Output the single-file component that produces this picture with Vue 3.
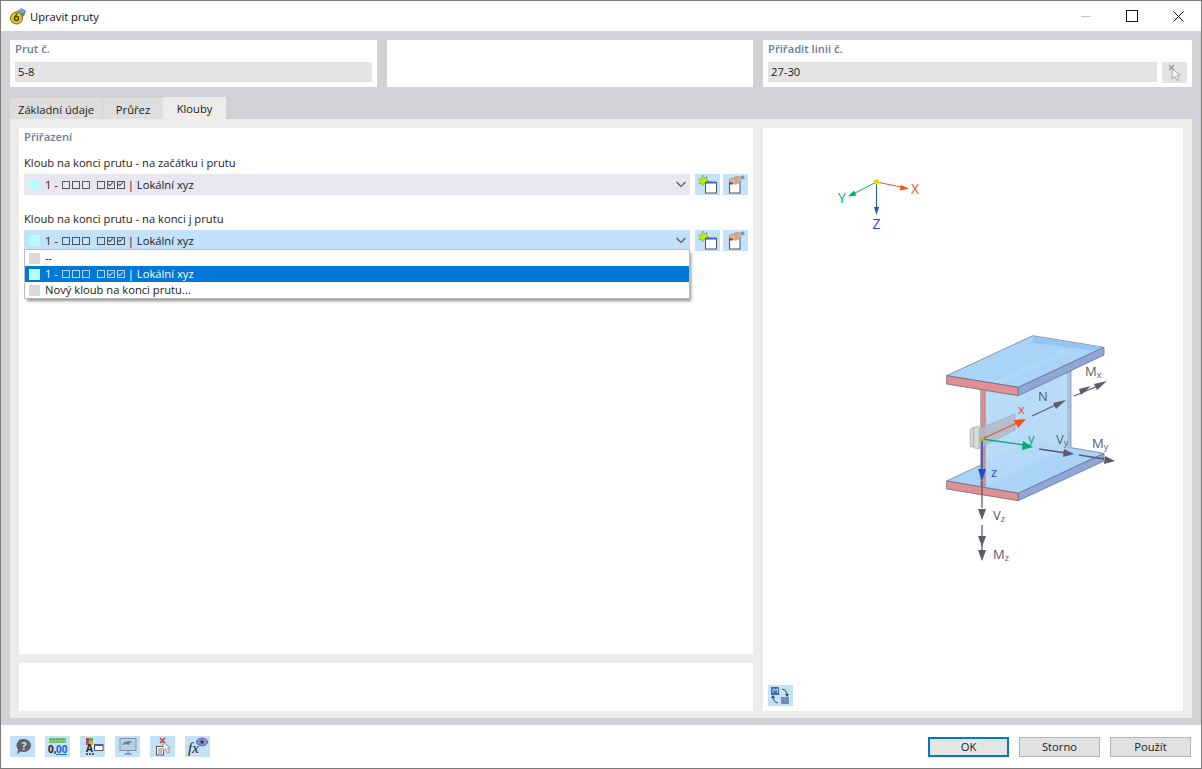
<script setup>
const tabs = [
  { label: 'Základní údaje', w: 92 },
  { label: 'Průřez', w: 60 },
  { label: 'Klouby', w: 63, active: true }
]
const boxesA = [0, 0, 0]
const boxesB = [0, 1, 1]
</script>

<template>
  <div class="win">
    <header class="title">
      <svg class="appicon" viewBox="0 0 18 18" width="18" height="18">
        <path d="M5 6 L12 1 L17 4 L15 9 L8 12Z" fill="#5b86b5" />
        <path d="M7 5 L13 2 M8 7 L15 4" stroke="#b8d0e4" stroke-width="1" />
        <circle cx="7.5" cy="11" r="6" fill="#e2c526" stroke="#77691a" stroke-width="1" />
        <circle cx="7.5" cy="11.5" r="2" fill="none" stroke="#4b4410" stroke-width="1.4" />
        <path d="M8 6.5 L6 10" stroke="#4b4410" stroke-width="1.4" />
      </svg>
      <span class="title-text">Upravit pruty</span>
      <div class="winbtns">
        <span class="wb"><i class="min"></i></span>
        <span class="wb"><i class="max"></i></span>
        <span class="wb">
          <svg width="11" height="11" viewBox="0 0 11 11"><path d="M.5.5l10 10M10.500.5l-10 10" stroke="#111" stroke-width="1" fill="none" /></svg>
        </span>
      </div>
    </header>

    <main class="body">
      <section class="toprow">
        <div class="tcard">
          <div class="tlabel">Prut č.</div>
          <div class="tfield">5-8</div>
        </div>
        <div class="tcard"></div>
        <div class="tcard">
          <div class="tlabel">Přiřadit linii č.</div>
          <div class="tline">
            <div class="tfield grow">27-30</div>
            <span class="pickbtn">
              <svg width="18" height="18" viewBox="0 0 18 18">
                <path d="M3 1l5 5M8 1L3 6" stroke="#9a9a9a" stroke-width="1.300" />
                <path d="M6 5l0 10 3-2.500 2 4 2-1-2-4 3.500-.5z" fill="#f2f2f2" stroke="#a8a8a8" stroke-width="1" />
              </svg>
            </span>
          </div>
        </div>
      </section>

      <nav class="tabs">
        <span v-for="t in tabs" :key="t.label" class="tab" :class="{ active: t.active }" :style="{ width: t.w + 'px' }">{{ t.label }}</span>
      </nav>

      <section class="content">
        <div class="leftcol">
          <div class="panel">
            <div class="ptitle">Přiřazení</div>

            <div class="flabel first">Kloub na konci prutu - na začátku i prutu</div>
            <div class="comborow">
              <div class="combo lilac">
                <i class="sw cyan"></i>
                <span class="ctext">1 -<span class="bxs lead"><i v-for="(b, n) in boxesA" :key="n" class="bx"></i></span><span class="bxs"><i v-for="(b, n) in boxesB" :key="n" class="bx" :class="{ on: b }"></i></span> | Lokální xyz</span>
                <svg class="chev" width="12" height="7" viewBox="0 0 12 7"><path d="M1.500 1l4.500 4.500L10.500 1" fill="none" stroke="#555" stroke-width="1.200" /></svg>
              </div>
              <span class="ibtn first-btn">
                <svg width="20" height="19" viewBox="0 0 20 19">
                  <path d="M5 0l1.300 3 3-1.500L8 4.500l3 1.500-3 1 1 3-3-1.500L4.500 11 3.800 8 .5 9l2-2.500L.5 4l3 .3z" fill="#b7f000" stroke="#7f9a55" stroke-width=".6" />
                  <rect x="7.500" y="7.500" width="11" height="10.500" fill="#fff" stroke="#555" />
                  <rect x="8" y="6.500" width="10.500" height="2" fill="#4c5fae" />
                </svg>
              </span>
              <span class="ibtn">
                <svg width="20" height="19" viewBox="0 0 20 19">
                  <rect x="3.500" y="7.500" width="10.500" height="10.500" fill="#fff" stroke="#555" />
                  <rect x="4" y="8" width="3" height="1.500" fill="#555" />
                  <path d="M2.500 5.500L6 3l5-1.500 4 .5.500 3-2.500 3-3.500 1.500-3-1.500-2.500-1z" fill="#dcae94" stroke="#a77d66" stroke-width=".5" />
                  <path d="M8 4l3 .5M9 6l3 .5" stroke="#a77d66" stroke-width=".5" />
                  <path d="M14 2.500l3-2.500 2 3.500-2.500.5z" fill="#5a93cf" />
                </svg>
              </span>
            </div>

            <div class="flabel second">Kloub na konci prutu - na konci j prutu</div>
            <div class="comborow combowrap">
              <div class="combo open">
                <i class="sw cyan"></i>
                <span class="ctext">1 -<span class="bxs lead"><i v-for="(b, n) in boxesA" :key="n" class="bx"></i></span><span class="bxs"><i v-for="(b, n) in boxesB" :key="n" class="bx" :class="{ on: b }"></i></span> | Lokální xyz</span>
                <svg class="chev" width="12" height="7" viewBox="0 0 12 7"><path d="M1.500 1l4.500 4.500L10.500 1" fill="none" stroke="#555" stroke-width="1.200" /></svg>
              </div>
              <span class="ibtn first-btn">
                <svg width="20" height="19" viewBox="0 0 20 19">
                  <path d="M5 0l1.300 3 3-1.500L8 4.500l3 1.500-3 1 1 3-3-1.500L4.500 11 3.800 8 .5 9l2-2.500L.5 4l3 .3z" fill="#b7f000" stroke="#7f9a55" stroke-width=".6" />
                  <rect x="7.500" y="7.500" width="11" height="10.500" fill="#fff" stroke="#555" />
                  <rect x="8" y="6.500" width="10.500" height="2" fill="#4c5fae" />
                </svg>
              </span>
              <span class="ibtn">
                <svg width="20" height="19" viewBox="0 0 20 19">
                  <rect x="3.500" y="7.500" width="10.500" height="10.500" fill="#fff" stroke="#555" />
                  <rect x="4" y="8" width="3" height="1.500" fill="#555" />
                  <path d="M2.500 5.500L6 3l5-1.500 4 .5.500 3-2.500 3-3.500 1.500-3-1.500-2.500-1z" fill="#dcae94" stroke="#a77d66" stroke-width=".5" />
                  <path d="M8 4l3 .5M9 6l3 .5" stroke="#a77d66" stroke-width=".5" />
                  <path d="M14 2.500l3-2.500 2 3.500-2.500.5z" fill="#5a93cf" />
                </svg>
              </span>

              <div class="popup">
                <div class="opt"><i class="sw grey"></i><span>--</span></div>
                <div class="opt sel">
                  <i class="sw cyan"></i>
                  <span class="ctext">1 -<span class="bxs lead"><i v-for="(b, n) in boxesA" :key="n" class="bx"></i></span><span class="bxs"><i v-for="(b, n) in boxesB" :key="n" class="bx" :class="{ on: b }"></i></span> | Lokální xyz</span>
                </div>
                <div class="opt"><i class="sw grey"></i><span>Nový kloub na konci prutu...</span></div>
              </div>
            </div>
          </div>
          <div class="panel-bottom"></div>
        </div>

        <div class="rightcol">
          <svg class="scene" viewBox="763 128 420 583" width="420" height="583">
            <!-- global axes -->
            <line x1="876.500" y1="182" x2="901" y2="187" stroke="#f4511e" stroke-width="1" />
            <path d="M909 188.500L900 190.500 900.800 185z" fill="#f4511e" />
            <line x1="876.500" y1="182" x2="855" y2="193" stroke="#0ba67a" stroke-width="1" />
            <path d="M848 196.500L854 190.500 856.500 195.500z" fill="#0ba67a" />
            <line x1="876.500" y1="182" x2="876.500" y2="208" stroke="#2255c4" stroke-width="1" />
            <path d="M876.500 215L874 207h5z" fill="#2255c4" />
            <circle cx="876.500" cy="182" r="2.700" fill="#e6d800" />
            <text x="915" y="194" class="ax" fill="#f4511e" text-anchor="middle">X</text>
            <text x="842" y="203" class="ax" fill="#0ba67a" text-anchor="middle">Y</text>
            <text x="876.500" y="229" class="ax" fill="#2255c4" text-anchor="middle">Z</text>

            <!-- bottom flange -->
            <path d="M946.700 481L1032 441 1104 453.300 1018.300 493.300z" fill="#a9d4f7" stroke="#6f7f9c" stroke-width=".8" />
            <path d="M946.700 481L1018.300 493.300 1018.300 500.700 946.700 489z" fill="#e09094" stroke="#6b6b78" stroke-width=".8" />
            <path d="M1018.300 493.300L1104 453.300 1104 461 1018.300 500.700z" fill="#8ea7d6" stroke="#6b7690" stroke-width=".8" />
            <path d="M985 486L1060 451" stroke="#7d93b3" stroke-width=".7" />

            <!-- web -->
            <path d="M985 391L1071 350 1071 447 985 487z" fill="#b4d9f8" fill-opacity=".95" />
            <path d="M1067 352L1071 350 1071 447 1067 449z" fill="#a9bfe0" />
            <line x1="1071" y1="350" x2="1071" y2="447" stroke="#7d8699" stroke-width=".7" />
            <!-- top flange -->
            <path d="M946.700 375.700L1032.700 335.700 1104 347.300 1018.300 387.300z" fill="#a9d4f7" stroke="#6f7f9c" stroke-width=".8" />
            <path d="M1033 336.500L1033 343 1097 351 1104 347.300z" fill="#95c6f0" />
            <path d="M995 383L1066 350M999 384L1070 351" stroke="#c4e0f8" stroke-width=".8" />
            <path d="M946.700 375.700L1018.300 387.300 1018.300 395.700 946.700 384z" fill="#e09094" stroke="#6b6b78" stroke-width=".8" />
            <path d="M1018.300 387.300L1104 347.300 1104 355 1018.300 395.700z" fill="#8ea7d6" stroke="#6b7690" stroke-width=".8" />

            <rect x="980.700" y="390" width="4.500" height="96" fill="#d98b90" stroke="#80808c" stroke-width=".5" />

            <!-- hinge plate -->
            <path d="M970 429L974 427 974 447 970 447z" fill="#d0d2d6" stroke="#9a9da6" stroke-width=".5" />
            <path d="M978 429L1015 414 1015 430 978 449z" fill="#b3bac6" fill-opacity=".85" stroke="#9a9da6" stroke-width=".5" />
            <path d="M974 427L979 426 979 449 974 448z" fill="#d8dade" stroke="#9a9da6" stroke-width=".5" />

            <!-- local axes -->
            <line x1="982" y1="439" x2="1017" y2="423" stroke="#e8541f" stroke-width="1.300" />
            <path d="M1026 419L1018 428 1014 420z" fill="#f4511e" />
            <line x1="982" y1="439" x2="1024" y2="445" stroke="#0ba67a" stroke-width="1.300" />
            <path d="M1033 447L1022 450 1023 441z" fill="#0ba67a" />
            <line x1="982" y1="439" x2="982" y2="470" stroke="#2255c4" stroke-width="1.500" />
            <path d="M982 481L978 469h8z" fill="#1d50c8" />
            <circle cx="982" cy="439" r="2.200" fill="#b7b23a" />
            <text x="1018" y="414" class="lb" fill="#f4511e">x</text>
            <text x="1028" y="443" class="lb" fill="#0ba67a">y</text>
            <text x="991" y="477" class="lb" fill="#2255c4">z</text>

            <!-- force arrows -->
            <g stroke="#5b5b6b" stroke-width="1.300" fill="none">
              <line x1="1032" y1="416" x2="1060" y2="403" />
              <line x1="1074" y1="396" x2="1100" y2="385" />
              <line x1="1039" y1="449" x2="1066" y2="453" />
              <line x1="1079" y1="455" x2="1104" y2="459" />
              <line x1="982" y1="481" x2="982" y2="508" />
              <line x1="982" y1="525" x2="982" y2="552" />
            </g>
            <g fill="#5b5b6b">
              <path d="M1066 400L1056 409 1053 403z" />
              <path d="M1091 386L1081 395 1079 389z" />
              <path d="M1107 381L1097 390 1094 384z" />
              <path d="M1074 454L1063 457 1064 449z" />
              <path d="M1115 461L1104 464 1105 456z" />
              <path d="M982 520L978 509h8z" />
              <path d="M982 547L978 536h8z" />
              <path d="M982 561L978 550h8z" />
            </g>
            <text x="1038" y="401" class="fr">N</text>
            <text x="1085" y="376" class="fr">M<tspan class="sub" dy="2">x</tspan></text>
            <text x="1056" y="444" class="fr">V<tspan class="sub" dy="2">y</tspan></text>
            <text x="1092" y="448" class="fr">M<tspan class="sub" dy="2">y</tspan></text>
            <text x="993" y="520" class="fr">V<tspan class="sub" dy="2">z</tspan></text>
            <text x="993" y="559" class="fr">M<tspan class="sub" dy="2">z</tspan></text>
          </svg>
          <span class="viewbtn">
            <svg width="21" height="19" viewBox="0 0 21 19">
              <rect x="1" y="1" width="8" height="8" fill="#3d6db0" />
              <path d="M3 7V3h1.500l1 2 1-2H7.500v4" fill="none" stroke="#dbe8f7" stroke-width=".8" />
              <rect x="11" y="11" width="8" height="7" fill="#6d8fb8" />
              <path d="M12 3a6 6 0 0 1 5 6M8 17a6 6 0 0 1-5-6" fill="none" stroke="#555" stroke-width="1.200" />
              <path d="M15 8h4l-2 3zM1 12h4l-2-3z" fill="#444" />
            </svg>
          </span>
        </div>
      </section>
    </main>

    <footer class="foot">
      <div class="ftools">
        <span class="fbtn">
          <svg width="20" height="19" viewBox="0 0 20 19">
            <path d="M11 2a7 6.500 0 0 1 0 13c-1 0-2-.2-3-.5L4 17l1-4.500A6.500 6.500 0 0 1 11 2z" fill="#5c6268" />
            <text x="11" y="12.500" class="q">?</text>
          </svg>
        </span>
        <span class="fbtn">
          <svg width="22" height="19" viewBox="0 0 22 19">
            <rect x="2" y="1" width="17" height="5" fill="#7fc27a" />
            <path d="M4 1v2M7 1v2M10 1v2M13 1v2M16 1v2" stroke="#3f8a3f" stroke-width=".8" />
            <text x="1" y="16" class="num" fill="#222">0,</text>
            <text x="9" y="16" class="num" fill="#2667c9">00</text>
            <line x1="9" y1="17.500" x2="20" y2="17.500" stroke="#2667c9" />
          </svg>
        </span>
        <span class="fbtn">
          <svg width="22" height="19" viewBox="0 0 22 19">
            <rect x="4" y="1" width="3.500" height="3.500" fill="#c83a3a" />
            <rect x="7.500" y="1" width="3.500" height="3.500" fill="#5aa545" />
            <rect x="4" y="4.500" width="3.500" height="3.500" fill="#8a4fb0" />
            <rect x="7.500" y="4.500" width="3.500" height="3.500" fill="#d8b22a" />
            <text x="7.500" y="15" class="aa">A</text>
            <path d="M4 17h2M7 17h2M10 17h2" stroke="#333" stroke-width="1.500" />
            <rect x="12.500" y="7.500" width="8.500" height="6" fill="#fff" stroke="#555" />
            <rect x="12.500" y="7" width="8.500" height="2" fill="#4c5fae" />
          </svg>
        </span>
        <span class="fbtn">
          <svg width="20" height="19" viewBox="0 0 20 19">
            <rect x="2" y="1.500" width="16" height="12" fill="#bcd0e2" stroke="#80919f" />
            <path d="M4 8c2-4 7-5 11-3-2 0-4 1-4 3-2-1-4-1-7 0z" fill="#4f86b6" />
            <path d="M10 14v2.500M6.500 17h7" stroke="#80919f" stroke-width="1.300" />
          </svg>
        </span>
        <span class="fbtn">
          <svg width="21" height="19" viewBox="0 0 21 19">
            <path d="M8 1l5 5M13 1L8 6" stroke="#d4312f" stroke-width="1.500" />
            <rect x="4.500" y="9.500" width="7" height="8.500" fill="#fff" stroke="#555" />
            <path d="M6 12h4M6 14h4M6 16h4" stroke="#555" stroke-width=".8" />
            <path d="M11 5l0 9 2.500-2 2 4 2-1-2-3.500 3-.5z" fill="#f3f3f3" stroke="#888" stroke-width=".9" />
          </svg>
        </span>
        <span class="fbtn">
          <svg width="22" height="19" viewBox="0 0 22 19">
            <text x="1" y="16" class="fx">fx</text>
            <ellipse cx="15" cy="5" rx="5.500" ry="3.800" fill="#8d8fc4" stroke="#4c4f8e" stroke-width=".8" />
            <circle cx="15" cy="5" r="1.700" fill="#2c2f6e" />
          </svg>
        </span>
      </div>
      <div class="factions">
        <span class="btn primary">OK</span>
        <span class="btn">Storno</span>
        <span class="btn">Použít</span>
      </div>
    </footer>
  </div>
</template>

<style scoped>
.win {
  width: 1202px;
  height: 769px;
  box-sizing: border-box;
  border: 1px solid #7b7b7b;
  display: flex;
  flex-direction: column;
  font-family: "Open Sans", "Noto Sans", sans-serif;
  font-size: 11.2px;
  color: #1a1a1a;
  background: #fff;
  overflow: hidden;
}
.title {
  height: 30px;
  flex: none;
  display: flex;
  align-items: center;
  padding-left: 8px;
  background: #fff;
}
.appicon { margin-right: 3px; }
.title-text { font-size: 11.2px; color: #111; }
.winbtns { margin-left: auto; display: flex; }
.wb { width: 46px; height: 30px; display: flex; align-items: center; justify-content: center; }
.min { width: 10px; height: 1px; background: #c4c4c4; }
.max { width: 10px; height: 10px; border: 1px solid #111; }

.body {
  flex: 1;
  min-height: 0;
  background: #d2d2d6;
  padding: 9px 9px 7px;
  display: flex;
  flex-direction: column;
}
.toprow {
  display: grid;
  grid-template-columns: 367px 366px 429px;
  column-gap: 10px;
  height: 47px;
  flex: none;
}
.tcard { background: #fff; padding: 0 5px; }
.tlabel { height: 22px; line-height: 18px; font-weight: 600; color: #6b7a9a; }
.tfield { height: 20px; line-height: 20px; background: #e4e4e4; padding-left: 3px; }
.tline { display: flex; gap: 5px; }
.grow { flex: 1; }
.pickbtn { width: 25px; height: 21px; background: #e4e4e4; display: flex; align-items: center; justify-content: center; }

.tabs { display: flex; height: 22px; margin-top: 10px; flex: none; align-items: flex-end; gap: 1px; }
.tab {
  height: 21px;
  line-height: 23px;
  background: #dedede;
  text-align: center;
  box-sizing: border-box;
}
.tab.active { height: 22px; background: #ecedeb; margin-left: -1px; line-height: 24px; }

.content {
  flex: 1;
  min-height: 0;
  background: #ecedeb;
  padding: 9px 9px 7px;
  display: grid;
  grid-template-columns: 734px 420px;
  column-gap: 10px;
}
.leftcol { display: flex; flex-direction: column; gap: 9px; min-height: 0; }
.panel { flex: 1; background: #fff; padding: 0 5px; }
.panel-bottom { height: 48px; background: #fff; flex: none; }
.ptitle { height: 20px; line-height: 18px; font-weight: 600; color: #6b7a9a; }
.flabel { height: 16px; line-height: 16px; color: #1a1a1a; }
.flabel.first { margin-top: 7px; margin-bottom: 3px; }
.flabel.second { margin-top: 16px; margin-bottom: 3px; }
.comborow { display: flex; height: 21px; position: relative; }
.combo {
  width: 666px;
  height: 21px;
  display: flex;
  align-items: center;
  padding-left: 5px;
  box-sizing: border-box;
}
.lilac { background: #e8e6f1; }
.open { background: #c3e1f8; }
.chev { margin-left: auto; margin-right: 3px; }
.ibtn { width: 25px; height: 21px; background: #c3e1f8; margin-left: 3px; display: flex; align-items: center; justify-content: center; }
.first-btn { margin-left: 5px; }
.sw { width: 11px; height: 11px; flex: none; margin-right: 5px; display: block; }
.cyan { background: #b5fdfd; }
.grey { background: #d9d9d9; }
.ctext { display: inline-flex; align-items: center; white-space: pre; }
.bxs { display: inline-flex; gap: 2px; margin-left: 7px; }
.bxs.lead { margin-left: 4px; }
.bx {
  width: 6px;
  height: 6px;
  display: block;
  border: 1px solid currentColor;
  opacity: .7;
  position: relative;
  box-sizing: content-box;
}
.bx.on::after {
  content: "";
  position: absolute;
  left: 1.500px;
  top: -.5px;
  width: 2px;
  height: 4px;
  border: solid currentColor;
  border-width: 0 1px 1px 0;
  transform: rotate(45deg);
}
.popup {
  position: absolute;
  left: 1px;
  top: 20px;
  width: 664px;
  height: 48px;
  background: #fff;
  box-shadow: 0 0 0 1px #bdbdbd, 2px 3px 3px rgba(0, 0, 0, .45);
  z-index: 3;
}
.opt { height: 16px; display: flex; align-items: center; padding-left: 4px; line-height: 16px; }
.opt.sel { background: #0078d7; color: #fff; }

.rightcol { background: #fff; display: flex; flex-direction: column; position: relative; min-height: 0; }
.scene { display: block; position: absolute; inset: 0; }
.viewbtn {
  position: absolute;
  left: 5px;
  bottom: 5px;
  width: 25px;
  height: 21px;
  background: #c3e1f8;
  display: flex;
  align-items: center;
  justify-content: center;
}
.ax { font-size: 14px; font-family: "Open Sans", sans-serif; }
.lb { font-size: 13px; font-family: "Open Sans", sans-serif; }
.fr { font-size: 13px; fill: #5b5b6b; font-family: "Open Sans", sans-serif; }
.sub { font-size: 9px; }

.foot {
  height: 43px;
  box-sizing: border-box;
  flex: none;
  background: #fff;
  display: flex;
  align-items: flex-start;
  justify-content: space-between;
  padding: 11px 10px 0 9px;
}
.ftools { display: flex; gap: 10px; }
.fbtn { width: 25px; height: 21px; background: #c3e1f8; display: flex; align-items: center; justify-content: center; }
.factions { display: flex; gap: 10px; padding-top: 1px; }
.btn {
  width: 81px;
  height: 20px;
  line-height: 18px;
  box-sizing: border-box;
  border: 1px solid #b4b4b4;
  background: #e1e1e1;
  text-align: center;
}
.btn.primary { border: 2px solid #0078d7; line-height: 16px; background: #e5e5e5; }
.q { font-size: 11px; font-weight: 700; fill: #c3e1f8; text-anchor: middle; font-family: "Open Sans", sans-serif; }
.num { font-size: 10px; font-weight: 700; font-family: "Open Sans", sans-serif; }
.aa { font-size: 10px; font-weight: 700; fill: #222; text-anchor: middle; font-family: "Open Sans", sans-serif; }
.fx { font-size: 15px; font-style: italic; font-family: "Liberation Serif", serif; fill: #222; }
</style>
